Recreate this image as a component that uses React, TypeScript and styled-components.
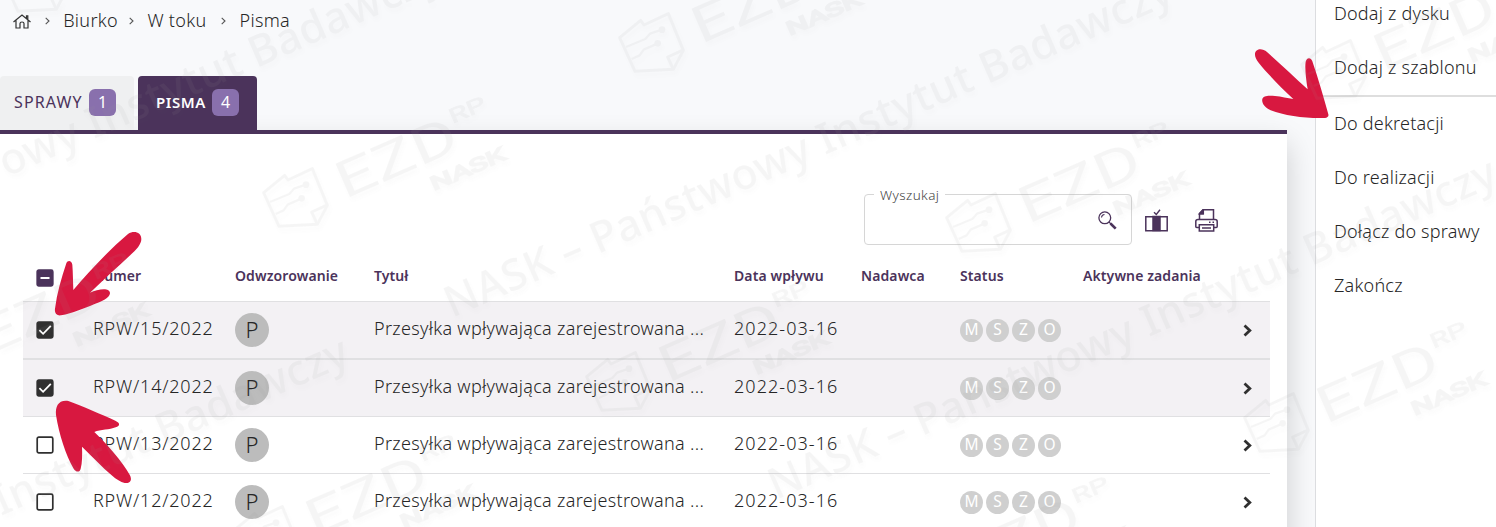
import React from 'react';
import styled, { createGlobalStyle } from 'styled-components';

const rows = [
  { id: 15, selected: true },
  { id: 14, selected: true },
  { id: 13, selected: false },
  { id: 12, selected: false },
];

const logos = [
  [295, 198], [651, 43], [978, 223], [618, 382], [1276, 423],
  [1333, 70], [265, 536], [918, 578], [-62, 354], [34, -17],
];

// Position of the first letter of every repeated line
const captions = [[-279, 302], [452, 318], [-372, 679], [776, 500]];

const Checkbox: React.FC<{ state: 'on' | 'off' | 'mixed' }> = ({ state }) => (
  <svg width="18" height="18" viewBox="0 0 18 18">
    <rect
      x="1.2" y="1.2" width="15.6" height="15.6" rx="1.6" strokeWidth="1.7"
      fill={state === 'off' ? '#fff' : state === 'on' ? '#303030' : '#4b335b'}
      stroke={state === 'mixed' ? '#4b335b' : '#303030'}
    />
    {state === 'on' && <path d="M3.4 9.2 7.1 12.8 14.8 4.9" fill="none" stroke="#fff" strokeWidth="1.8" />}
    {state === 'mixed' && <path d="M4.5 9H13.5" stroke="#fff" strokeWidth="2" />}
  </svg>
);

const HomeIcon = () => (
  <svg width="18" height="15" viewBox="0 0 18 15" fill="none" stroke="#333" strokeWidth="1.2">
    <path d="M.5 8 9 1l8.500 7M3 6.500V14h4V9.500Q7 8 9 8t2 1.500V14h4V6.500M13.500 4.500V1.800h1.300v4" />
  </svg>
);

const SearchIcon = () => (
  <svg width="19" height="19" viewBox="0 0 19 19" fill="none" stroke="#4b335b">
    <circle cx="6.800" cy="6.800" r="5.900" strokeWidth="1.300" />
    <path d="M3.500 6.500Q3.800 3.700 6.500 3.500M11 11l2 2" strokeWidth="1.100" />
    <path d="M12.500 12.500 17.700 17.700" strokeWidth="2.600" />
  </svg>
);

const ColumnsIcon = () => (
  <svg width="23" height="23" viewBox="0 0 23 23" fill="none" stroke="#4b335b" strokeWidth="1.500">
    <path d="M.8 7.800H22.200V21.700H.8Z" />
    <path d="M8 7.500h7v14H8Z" fill="#4b335b" />
    <path d="M9 3.200 11.300 5.500 15 .8" strokeWidth="1.400" />
  </svg>
);

const PrinterIcon = () => (
  <svg width="23" height="23" viewBox="0 0 23 23" fill="none" stroke="#4b335b" strokeWidth="1.500">
    <path d="M4.500 10.500V4.500L8 .8H18.500V10.500M4.500 4.800H8.300V.8" />
    <path d="M8 1 4.500 4.800H8Z" fill="#4b335b" />
    <path d="M4 18.500H1.800Q.8 18.500.8 17.500V12.500Q.8 10.500 3 10.500H20Q22.200 10.500 22.200 12.500V17.500Q22.200 18.500 21.200 18.500H19" />
    <path d="M4.300 15.700H18.700V22H4.300ZM7 18.900H16M14 13.200h1.500M17.500 13.200h1.500" />
  </svg>
);

const Chevron: React.FC<{ bold?: boolean }> = ({ bold }) => (
  <svg width={bold ? 10 : 5} height={bold ? 13 : 8} viewBox={bold ? '0 0 10 13' : '0 0 5 8'} fill="none">
    <path
      d={bold ? 'M1.500 1.500 6.800 6.500 1.500 11.500' : 'M.7.8 4 4 .7 7.200'}
      stroke={bold ? '#303030' : '#555'}
      strokeWidth={bold ? 2.8 : 1.1}
    />
  </svg>
);

const Watermark = () => (
  <Overlay width="1496" height="527" viewBox="0 0 1496 527">
    {logos.map(([x, y]) => (
      <g key={`${x}-${y}`} transform={`translate(${x} ${y})`}>
        <g transform="scale(.33333) translate(-135 -354)">
          <g fill="none" stroke="#999" strokeWidth="9" strokeLinejoin="round">
            <path d="M41 338 104 286 114 300 187 266 232 376 202 433 87 439Z" />
            <path d="M229 376 185 396 202 433" />
            <path d="M60 366 118 342 132 326 168 314M77 402 101 391 113 374 154 356" strokeWidth="7" />
          </g>
          <circle cx="168" cy="314" r="10" />
          <circle cx="155" cy="355" r="10" />
        </g>
        <g transform="rotate(-23.600)">
          <Brand x="45" y="21" $size={51} $stroke={0} textLength="128" lengthAdjust="spacingAndGlyphs">EZD</Brand>
          <Brand x="174" y="-5" $size={20} $stroke={0.8} textLength="38" lengthAdjust="spacingAndGlyphs">RP</Brand>
          <Brand x="130" y="49" $size={19} $stroke={1.7} textLength="80" lengthAdjust="spacingAndGlyphs">NASK</Brand>
        </g>
      </g>
    ))}
    {captions.map(([x, y]) => (
      <Caption key={x} transform={`translate(${x} ${y}) rotate(-23.600)`} textLength="790">
        NASK – Państwowy Instytut Badawczy
      </Caption>
    ))}
  </Overlay>
);

const Arrows = () => (
  <ArrowLayer width="1496" height="527" viewBox="0 0 1496 527">
    <g transform="translate(0 220) scale(.33333)">
      <path d="M384 42C402 30 424 37 424 57C424 72 411 88 388 108C351 142 312 178 270 218C294 207 330 201 330 220C329 235 302 246 282 253C250 266 219 280 183 286C171 288 163 279 165 266C171 219 184 175 199 130C203 119 215 121 217 134C219 158 219 186 220 210C268 154 326 91 384 42Z" />
    </g>
    <g transform="translate(0 360) scale(.33333)">
      <path d="M205 123C245 138 307 164 346 182C361 189 361 197 347 202C329 210 302 208 283 216C318 249 368 306 389 344C398 360 391 371 374 369C361 366 350 359 335 346C305 321 277 289 246 260C247 284 247 308 242 326C239 339 227 336 221 326C197 285 177 222 168 165C166 139 175 119 205 123Z" />
    </g>
    <g transform="translate(1230 0) scale(.33333)">
      <path d="M111 156C154 195 192 230 233 268C228 239 224 203 227 185C231 171 243 172 247 184C265 237 281 292 295 343C297 350 292 353 285 354C231 356 164 348 122 331C104 324 94 308 97 297C100 286 116 286 135 288C154 290 173 294 190 297C153 263 110 218 86 188C72 171 71 154 84 149C92 146 103 149 111 156Z" />
    </g>
  </ArrowLayer>
);

const App: React.FC = () => {
  return (
    <Page>
      <GlobalStyle />
      <Main>
        <Breadcrumbs>
          <HomeIcon />
          <Chevron />
          <Crumb $width={52}>Biurko</Crumb>
          <Chevron />
          <Crumb $width={60}>W toku</Crumb>
          <Chevron />
          <Crumb $width={50}>Pisma</Crumb>
        </Breadcrumbs>

        <Tabs>
          <Tab $width={134}>SPRAWY <Badge>1</Badge></Tab>
          <Tab $width={119} $active>PISMA <Badge>4</Badge></Tab>
        </Tabs>

        <Panel>
          <Toolbar>
            <SearchField>
              <legend>Wyszukaj</legend>
              <SearchIcon />
            </SearchField>
            <IconButton><ColumnsIcon /></IconButton>
            <IconButton><PrinterIcon /></IconButton>
          </Toolbar>

          <HeaderRow>
            <Checkbox state="mixed" />
            <span>Numer</span>
            <span>Odwzorowanie</span>
            <span>Tytuł</span>
            <span>Data wpływu</span>
            <span>Nadawca</span>
            <span>Status</span>
            <span>Aktywne zadania</span>
          </HeaderRow>
          {rows.map((row, index) => (
            <Row key={row.id} $selected={row.selected} $thick={index === 1}>
              <Checkbox state={row.selected ? 'on' : 'off'} />
              <Cell $spacing={0.8}>RPW/{row.id}/2022</Cell>
              <Avatar>P</Avatar>
              <Cell $spacing={0.31}>Przesyłka wpływająca zarejestrowana ...</Cell>
              <Cell $spacing={1.05}>2022-03-16</Cell>
              <span />
              <StatusList>
                {['M', 'S', 'Z', 'O'].map((letter) => (
                  <Status key={letter}>{letter}</Status>
                ))}
              </StatusList>
              <span />
              <Chevron bold />
            </Row>
          ))}
        </Panel>
      </Main>

      <Sidebar>
        <MenuItem>Dodaj z dysku</MenuItem>
        <MenuItem>Dodaj z szablonu</MenuItem>
        <Divider />
        <MenuItem>Do dekretacji</MenuItem>
        <MenuItem>Do realizacji</MenuItem>
        <MenuItem>Dołącz do sprawy</MenuItem>
        <MenuItem>Zakończ</MenuItem>
      </Sidebar>

      <Arrows />
      <Watermark />
    </Page>
  );
};

// Styled components

export default App;

const GlobalStyle = createGlobalStyle`
  * {
    box-sizing: border-box;
  }
  body {
    margin: 0;
    overflow: hidden;
    font-family: 'Noto Sans', sans-serif;
    font-weight: 300;
    color: #262626;
  }
  svg {
    display: block;
    flex: none;
  }
`;

const Page = styled.div`
  position: relative;
  display: flex;
  width: 1496px;
  height: 527px;
  overflow: hidden;
  background: #f8f9fb;
`;

const Main = styled.main`
  width: 1315px;
  height: 527px;
  overflow: hidden;
`;

const Breadcrumbs = styled.nav`
  display: flex;
  align-items: center;
  gap: 13.6px;
  height: 42px;
  padding-left: 13px;
  font-size: 18px;
`;

const Crumb = styled.span<{ $width: number }>`
  width: ${(props) => props.$width}px;
  padding-bottom: 2px;
  letter-spacing: 0.3px;
  white-space: nowrap;
`;

const Tabs = styled.div`
  display: flex;
  gap: 4px;
  height: 54px;
  margin-top: 34px;
`;

const Tab = styled.div<{ $width: number; $active?: boolean }>`
  display: flex;
  align-items: center;
  justify-content: space-between;
  width: ${(props) => props.$width}px;
  padding: 0 18px 2px ${(props) => (props.$active ? 18 : 14)}px;
  border-radius: 4px 4px 0 0;
  background: ${(props) => (props.$active ? '#4b335b' : '#eff0f1')};
  color: ${(props) => (props.$active ? '#fff' : '#4b335b')};
  font-size: ${(props) => (props.$active ? 15 : 16)}px;
  font-weight: ${(props) => (props.$active ? 600 : 400)};
  letter-spacing: ${(props) => (props.$active ? 0.6 : 1.1)}px;
`;

const Badge = styled.span`
  display: flex;
  align-items: center;
  justify-content: center;
  width: 27px;
  height: 27px;
  border-radius: 6px;
  background: #8970ad;
  color: #fff;
  font-size: 16px;
  font-weight: 400;
  letter-spacing: 0;
`;

const Panel = styled.section`
  width: 1287px;
  height: 420px;
  padding: 0 17px 0 23px;
  border-top: 4px solid #4b335b;
  background: #fff;
  box-shadow: 0 14px 28px rgba(0, 0, 0, 0.18);
`;

const Toolbar = styled.div`
  display: flex;
  align-items: center;
  justify-content: flex-end;
  height: 113px;
  padding: 59px 48px 0 0;
`;

const SearchField = styled.fieldset`
  display: flex;
  align-items: flex-start;
  justify-content: flex-end;
  width: 268px;
  height: 59px;
  margin: -10px 8px 0 0;
  padding: 7px 14px 0 9px;
  border: 1px solid #d6d6d6;
  border-radius: 4px;

  legend {
    height: 18px;
    padding: 0 6px;
    color: #444;
    font-size: 13.500px;
    line-height: 18px;
    letter-spacing: 0.4px;
  }
`;

const IconButton = styled.span`
  display: flex;
  align-items: center;
  justify-content: center;
  width: 32px;
  height: 32px;

  & + & {
    margin-left: 18px;
  }
`;

const HeaderRow = styled.div`
  display: grid;
  grid-template-columns: 57px 142px 139px 360px 127px 99px 123px 160px 14px;
  align-items: center;
  height: 54px;
  padding: 8px 0 0 13px;
  color: #4b335b;
  font-size: 14px;
  font-weight: 600;
  letter-spacing: 0.1px;

  span {
    padding-bottom: 5px;
  }
`;

const Row = styled.div<{ $selected: boolean; $thick: boolean }>`
  display: grid;
  grid-template-columns: 57px 142px 139px 360px 127px 99px 123px 160px 14px;
  align-items: center;
  height: ${(props) => (props.$thick ? 58 : 57)}px;
  padding-left: 13px;
  border-top: ${(props) => (props.$thick ? 2 : 1)}px solid #e0e0e2;
  background: ${(props) => (props.$selected ? '#f3f1f4' : '#fff')};
`;

const Cell = styled.span<{ $spacing: number }>`
  padding-bottom: 4px;
  font-size: 18px;
  letter-spacing: ${(props) => props.$spacing}px;
  white-space: nowrap;
`;

const Avatar = styled.span`
  display: flex;
  align-items: center;
  justify-content: center;
  width: 34px;
  height: 34px;
  padding-bottom: 2px;
  border-radius: 50%;
  background: #bcbcbc;
  font-size: 22px;
`;

const StatusList = styled.div`
  display: flex;
  gap: 3px;
`;

const Status = styled.span`
  display: flex;
  align-items: center;
  justify-content: center;
  width: 23px;
  height: 23px;
  padding-bottom: 2px;
  border-radius: 50%;
  background: #cfcfcf;
  color: #fff;
  font-size: 15.500px;
  font-weight: 400;
`;

const Sidebar = styled.aside`
  width: 181px;
  height: 527px;
  border-left: 1px solid #dcdde0;
  background: #fff;
  overflow: hidden;
`;

const MenuItem = styled.div`
  display: flex;
  align-items: center;
  height: 54px;
  padding: 0 0 2px 18px;
  font-size: 18px;
  letter-spacing: 0.22px;
  white-space: nowrap;

  &:first-child {
    margin-top: -13px;
  }
`;

const Divider = styled.hr`
  height: 2px;
  margin: 0;
  border: 0;
  background: #dedede;
`;

const Overlay = styled.svg`
  position: absolute;
  top: 0;
  left: 0;
  opacity: 0.085;
  fill: #999;
  filter: drop-shadow(2px 4px 2px rgba(120, 120, 120, 0.3));
  pointer-events: none;
`;

const ArrowLayer = styled.svg`
  position: absolute;
  top: 0;
  left: 0;
  fill: #d81840;
  pointer-events: none;
`;

const Brand = styled.text<{ $size: number; $stroke: number }>`
  font-family: Roboto, sans-serif;
  font-size: ${(props) => props.$size}px;
  font-weight: 400;
  stroke: #999;
  stroke-width: ${(props) => props.$stroke}px;
`;

const Caption = styled.text`
  font-family: 'Noto Sans', sans-serif;
  font-size: 43px;
  font-weight: 500;
`;
